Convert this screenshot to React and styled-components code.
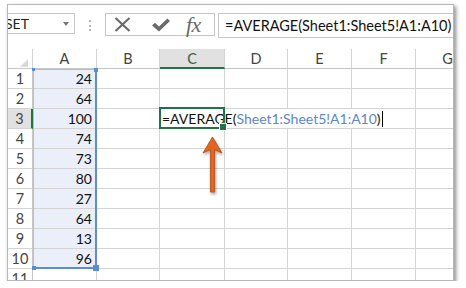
import React from "react";
import styled, { createGlobalStyle } from "styled-components";

const GlobalStyle = createGlobalStyle`
  * { box-sizing: border-box; }
  html, body { margin: 0; background: #fff; }
  body { font-family: Lato, "Liberation Sans", sans-serif; }
`;

const Frame = styled.div`
  position: relative;
  margin: 4px 0 0 7px;
  width: 447px;
  height: 277px;
  border: 1px solid #b8b8b8;
  box-shadow: 2px 2px 4px rgba(0, 0, 0, 0.45);
  background: #fff;
  overflow: hidden;
`;

const FormulaBar = styled.div`
  display: flex;
  align-items: flex-start;
  height: 44px;
  padding-top: 8px;
`;

const NameBox = styled.div`
  display: flex;
  align-items: center;
  justify-content: space-between;
  flex: none;
  width: 77px;
  height: 21px;
  margin-left: -10px;
  padding: 0 5px 0 6px;
  border: 1px solid #c6c6c6;
  font-size: 14px;
  color: #222;
`;

const DropArrow = styled.span`
  width: 0;
  height: 0;
  border-left: 3.5px solid transparent;
  border-right: 3.5px solid transparent;
  border-top: 4px solid #777;
`;

const Grip = styled.div`
  flex: none;
  width: 2px;
  height: 11px;
  margin: 7px 0 0 14px;
  border-left: 2px dotted #b4b4b4;
`;

const ButtonGroup = styled.div`
  display: flex;
  align-items: center;
  flex: none;
  width: 110px;
  height: 23px;
  margin-left: 14px;
  padding-left: 8px;
  border: 1px solid #c6c6c6;
`;

const IconSlot = styled.span`
  display: flex;
  align-items: center;
  margin-left: ${(p) => p.$gap || 0}px;
`;

const Fx = styled.span`
  margin-left: 16px;
  font-family: "Liberation Serif", serif;
  font-style: italic;
  font-size: 22px;
  line-height: 21px;
  color: #6b6b6b;
  letter-spacing: -0.5px;
`;

const FormulaBox = styled.div`
  flex: none;
  width: 260px;
  height: 25px;
  margin-left: 3px;
  padding-left: 6px;
  border: 1px solid #c6c6c6;
  font-size: 14.5px;
  line-height: 23px;
  color: #111;
  white-space: nowrap;
`;

const Grid = styled.div`
  position: relative;
  display: grid;
  grid-template-columns: 25px 64px 63px 65px 63px 64px 64px 64px;
  grid-auto-rows: 20px;
`;

const Corner = styled.div`
  position: relative;
  border-right: 1px solid #d4d4d4;
  border-bottom: 1px solid #c6c6c6;

  &::after {
    content: "";
    position: absolute;
    right: 4px;
    bottom: 1px;
    border-style: solid;
    border-width: 0 0 8px 8px;
    border-color: transparent transparent #d9d9d9 transparent;
  }
`;

const ColHead = styled.div`
  border-right: 1px solid #d4d4d4;
  border-bottom: ${(p) => (p.$active ? "2px solid #217346" : "1px solid #c6c6c6")};
  background: ${(p) => (p.$active ? "#e1e1e1" : "#fff")};
  color: ${(p) => (p.$active ? "#3a5f47" : "#444")};
  font-size: 14.5px;
  line-height: 19px;
  text-align: center;
`;

const RowHead = styled.div`
  border-right: ${(p) => (p.$active ? "2px solid #217346" : "1px solid #c6c6c6")};
  border-bottom: 1px solid #d4d4d4;
  background: ${(p) => (p.$active ? "#e1e1e1" : "#fff")};
  color: #444;
  font-size: 14.5px;
  line-height: 19px;
  text-align: center;
`;

const Cell = styled.div`
  position: relative;
  z-index: ${(p) => (p.$editing ? 3 : "auto")};
  border-right: 1px solid #d4d4d4;
  border-bottom: 1px solid #d4d4d4;
  background: ${(p) => (p.$fill ? "#eaeff9" : "#fff")};
  padding-right: 4px;
  font-size: 14px;
  line-height: 19px;
  text-align: right;
  color: #111;
`;

const EditText = styled.div`
  position: absolute;
  left: 0;
  top: 0;
  height: 19px;
  padding: 0 3px 0 2px;
  background: #fff;
  white-space: nowrap;
  text-align: left;
`;

const Ref = styled.span`
  color: #5b86d2;
`;

const Caret = styled.span`
  display: inline-block;
  width: 1px;
  height: 16px;
  margin-left: 1px;
  vertical-align: -3px;
  background: #000;
`;

const EditBox = styled.div`
  position: absolute;
  left: -1px;
  top: -2px;
  width: 66px;
  height: 22px;
  border: 2px solid #217346;

  &::after {
    content: "";
    position: absolute;
    right: -4px;
    bottom: -4px;
    width: 6px;
    height: 6px;
    background: #217346;
    border: 1px solid #fff;
  }
`;

const RangeBox = styled.div`
  position: absolute;
  left: 25px;
  top: 20px;
  width: 64px;
  height: 200px;
  border-left: 1px solid #a9c0e8;
  border-top: 1px solid #a9c0e8;
  border-right: 2px solid #5b8bd9;
  border-bottom: 2px solid #5b8bd9;
  pointer-events: none;
`;

const Handle = styled.span`
  position: absolute;
  width: ${(p) => p.$size}px;
  height: ${(p) => p.$size}px;
  background: #5b8bd9;
  ${(p) => p.$pos}
`;

const Arrow = styled.svg`
  position: absolute;
  left: 192px;
  top: 129px;
  filter: drop-shadow(1px 2px 1.5px rgba(0, 0, 0, 0.35));
`;

const values = [24, 64, 100, 74, 73, 80, 27, 64, 13, 96, null];
const cols = ["A", "B", "C", "D", "E", "F", "G"];

const FORMULA = "=AVERAGE(Sheet1:Sheet5!A1:A10)";

export default function App() {
  return (
    <>
      <GlobalStyle />
      <Frame>
        <FormulaBar>
          <NameBox>
            <span>SET</span>
            <DropArrow />
          </NameBox>
          <Grip />
          <ButtonGroup>
            <IconSlot>
              <svg width="17" height="15" viewBox="0 0 17 15">
                <path d="M1.5 1 L15.5 14 M15.5 1 L1.5 14" stroke="#6b6b6b" strokeWidth="2.2" fill="none" />
              </svg>
            </IconSlot>
            <IconSlot $gap={21}>
              <svg width="18" height="14" viewBox="0 0 18 14">
                <polygon points="0,7.5 3,4.8 7,8.6 15.4,0.4 18,3 7,13.6" fill="#6b6b6b" />
              </svg>
            </IconSlot>
            <Fx>fx</Fx>
          </ButtonGroup>
          <FormulaBox>{FORMULA}</FormulaBox>
        </FormulaBar>

        <Grid>
          <Corner />
          {cols.map((c) => (
            <ColHead key={c} $active={c === "C"}>
              {c}
            </ColHead>
          ))}
          {values.map((v, i) => (
            <React.Fragment key={i}>
              <RowHead $active={i === 2}>{i + 1}</RowHead>
              <Cell $fill={v !== null}>{v}</Cell>
              <Cell />
              {i === 2 ? (
                <Cell $editing>
                  <EditText>
                    =AVERAGE(<Ref>Sheet1:Sheet5!A1:A10</Ref>)<Caret />
                  </EditText>
                  <EditBox />
                </Cell>
              ) : (
                <Cell />
              )}
              <Cell />
              <Cell />
              <Cell />
              <Cell />
            </React.Fragment>
          ))}
          <RangeBox>
            <Handle $size={3} $pos="left: -2px; top: -2px;" />
            <Handle $size={4} $pos="right: -3px; top: -2px;" />
            <Handle $size={4} $pos="left: -2px; bottom: -3px;" />
            <Handle $size={6} $pos="right: -4px; bottom: -4px;" />
          </RangeBox>
        </Grid>

        <Arrow width="26" height="62" viewBox="0 0 26 62">
          <polygon
            points="12.5,3 22,19 14.6,15.6 14.6,58 10.4,58 10.4,15.6 3,19"
            fill="#e2661f"
            stroke="#b04a10"
            strokeWidth="0.8"
            strokeLinejoin="round"
          />
        </Arrow>
      </Frame>
    </>
  );
}
